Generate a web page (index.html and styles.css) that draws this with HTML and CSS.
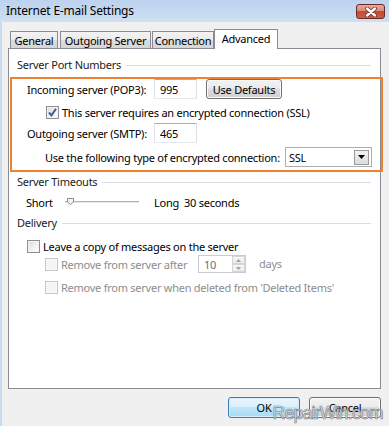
FILE: index.html
```html
<!DOCTYPE html>
<html>
<head>
<meta charset="utf-8">
<title>Internet E-mail Settings</title>
<link rel="stylesheet" href="styles.css">
</head>
<body>
<div class="window">
  <div class="titlebar">
    <span class="title">Internet E-mail Settings</span>
    <span class="close"><svg width="14" height="10" viewBox="0 0 14 10"><path d="M3 1.5 L11 8.5 M11 1.5 L3 8.5" stroke="#5a2a26" stroke-width="3.8" stroke-linecap="round"/><path d="M3 1.5 L11 8.5 M11 1.5 L3 8.5" stroke="#fff" stroke-width="2.4" stroke-linecap="round"/></svg></span>
  </div>
  <div class="client">
    <div class="tabs">
      <div class="tab t-general">General</div>
      <div class="tab t-outgoing">Outgoing Server</div>
      <div class="tab t-connection">Connection</div>
      <div class="tab t-advanced active">Advanced</div>
    </div>
    <div class="panel">
      <div class="group-head g1"><span>Server Port Numbers</span></div>
      <div class="highlight">
        <div class="row r1">
          <span class="label">Incoming server (POP3):</span>
          <span class="textbox port">995</span>
          <span class="btn defaults">Use Defaults</span>
        </div>
        <div class="row r2">
          <span class="check checked"><svg width="11" height="11" viewBox="0 0 11 11"><path d="M2 5.5 L4.5 8.3 L9 1.8" fill="none" stroke="#3b5c9c" stroke-width="2"/></svg></span>
          <span class="check-text">This server requires an encrypted connection (SSL)</span>
        </div>
        <div class="row r3">
          <span class="label">Outgoing server (SMTP):</span>
          <span class="textbox port">465</span>
        </div>
        <div class="row r4">
          <span class="label-long">Use the following type of encrypted connection:</span>
          <span class="select"><span class="select-val">SSL</span><span class="select-btn"><svg width="7" height="4" viewBox="0 0 7 4"><path d="M0 0 H7 L3.5 4 Z" fill="#000"/></svg></span></span>
        </div>
      </div>
      <div class="group-head g2"><span>Server Timeouts</span></div>
      <div class="row timeouts">
        <span class="short">Short</span>
        <span class="slider"><span class="track"></span><span class="thumb"><svg width="7" height="7" viewBox="0 0 7 7"><path d="M0.5 0.5 V4 L3.5 6.5 L6.5 4 V0.5 Z" fill="#f4f4f4" stroke="#8a8a8a"/></svg></span></span>
        <span class="long">Long</span>
        <span class="secs">30 seconds</span>
      </div>
      <div class="group-head g3"><span>Delivery</span></div>
      <div class="row d1">
        <span class="check"></span>
        <span class="check-text">Leave a copy of messages on the server</span>
      </div>
      <div class="row d2">
        <span class="check disabled"></span>
        <span class="check-text dim remove-after">Remove from server after</span>
        <span class="spinner"><span class="spin-val">10</span><span class="spin-btns"><span class="spin-up"><svg width="5" height="3" viewBox="0 0 5 3"><path d="M0 3 H5 L2.5 0 Z" fill="#a0a0a0"/></svg></span><span class="spin-down"><svg width="5" height="3" viewBox="0 0 5 3"><path d="M0 0 H5 L2.5 3 Z" fill="#a0a0a0"/></svg></span></span></span>
        <span class="dim days">days</span>
      </div>
      <div class="row d3">
        <span class="check disabled"></span>
        <span class="check-text dim">Remove from server when deleted from 'Deleted Items'</span>
      </div>
    </div>
    <div class="buttons">
      <span class="btn ok">OK</span>
      <span class="btn cancel">Cancel</span>
    </div>
    <div class="watermark">RepairWin.com</div>
  </div>
</div>
</body>
</html>
```
FILE: styles.css
```css
html, body {
  margin: 0;
  padding: 0;
}
body {
  width: 389px;
  height: 426px;
  overflow: hidden;
  font-family: "Noto Sans", "Open Sans", sans-serif;
  font-size: 11px;
  letter-spacing: -0.25px;
  color: #000;
  white-space: nowrap;
}
.window {
  width: 389px;
  height: 426px;
  display: flex;
  flex-direction: column;
  background: #f0f0f0;
}
.titlebar {
  height: 22px;
  flex: none;
  display: flex;
  align-items: flex-start;
  justify-content: space-between;
  background: linear-gradient(#bcd2ee, #cfdff3);
  padding: 0 4px 0 6px;
}
.title {
  font-size: 12px;
  line-height: 22px;
  letter-spacing: -0.2px;
  color: #000;
}
.close {
  margin-top: 4px;
  width: 29px;
  height: 15px;
  box-sizing: border-box;
  border: 1px solid #6a2b27;
  border-radius: 3px;
  background: linear-gradient(#eaa797 0%, #dc8b77 45%, #c54a32 50%, #cf5d42 100%);
  display: flex;
  align-items: center;
  justify-content: center;
}
.client {
  flex: 1;
  border-left: 2px solid #c9dbef;
  position: relative;
}
.tabs {
  display: flex;
  align-items: flex-end;
  height: 26px;
  padding-left: 8px;
  position: relative;
  z-index: 2;
}
.tab {
  height: 17px;
  box-sizing: border-box;
  border: 1px solid #898c95;
  border-bottom: none;
  background: linear-gradient(#f3f3f3 0%, #ebebeb 50%, #dddddd 51%, #d6d6d6 100%);
  display: flex;
  align-items: center;
  justify-content: center;
  padding-top: 1px;
}
.t-general { width: 48px; }
.t-outgoing { width: 91px; margin-left: 2px; }
.t-connection { width: 62px; margin-left: 1px; }
.t-advanced { width: 64px; margin-left: 0; }
.tab.active {
  height: 20px;
  background: #fff;
  margin-bottom: -1px;
  padding-top: 0;
  padding-bottom: 2px;
}
.panel {
  margin-left: 6px;
  width: 373px;
  height: 341px;
  box-sizing: border-box;
  border: 1px solid #898c95;
  background: #fff;
  display: flex;
  flex-direction: column;
}
.group-head {
  height: 14px;
  display: flex;
  align-items: center;
  padding-left: 8px;
  margin-right: 9px;
  flex: none;
}
.group-head span {
  line-height: 14px;
  color: #1b1b1b;
}
.group-head::after {
  content: "";
  flex: 1;
  height: 1px;
  background: #d5dfe5;
  margin-left: 5px;
}
.g1 { margin-top: 9px; }
.g2 { margin-top: 3px; }
.g3 { margin-top: 6px; }
.highlight {
  margin-top: 5px;
  margin-left: 1px;
  margin-right: -3px;
  border: 2px solid #f0812e;
  padding: 0 0 3px 15px;
  flex: none;
}
.row {
  display: flex;
  align-items: center;
  flex: none;
}
.r1 { height: 20px; }
.r2 { height: 16px; margin-top: 5px; padding-left: 19px; }
.r3 { height: 20px; margin-top: 3px; }
.r4 { height: 20px; margin-top: 4px; padding-left: 18px; }
.label {
  width: 127px;
  flex: none;
}
.label-long {
  width: 240px;
  flex: none;
}
.textbox {
  height: 20px;
  box-sizing: border-box;
  border: 1px solid #abadb3;
  border-left-color: #e2e3ea;
  border-right-color: #dbdfe6;
  border-bottom-color: #e3e9ef;
  background: #fff;
  display: flex;
  align-items: center;
  padding-left: 5px;
}
.port { width: 43px; }
.btn {
  box-sizing: border-box;
  border: 1px solid #707070;
  border-radius: 3px;
  background: linear-gradient(#f2f2f2 0%, #ebebeb 45%, #dddddd 50%, #cfcfcf 100%);
  box-shadow: inset 0 0 0 1px #fcfcfc;
  display: flex;
  align-items: center;
  justify-content: center;
}
.defaults {
  width: 76px;
  height: 20px;
  margin-left: 9px;
}
.check {
  width: 13px;
  height: 13px;
  box-sizing: border-box;
  border: 1px solid #8e8f8f;
  background: linear-gradient(135deg, #dcdcdc, #f6f6f6 70%, #fff);
  box-shadow: inset 0 0 0 1px #f4f4f4;
  flex: none;
  display: flex;
  align-items: center;
  justify-content: center;
}
.check.disabled {
  border-color: #c5c5c5;
  background: #f4f4f4;
  box-shadow: inset 0 0 0 1px #fbfbfb;
}
.check-text {
  margin-left: 3px;
}
.select {
  width: 87px;
  height: 20px;
  box-sizing: border-box;
  border: 1px solid #abadb3;
  background: #fff;
  display: flex;
  align-items: center;
  justify-content: space-between;
  padding: 0 2px 0 3px;
}
.select-btn {
  width: 15px;
  height: 15px;
  box-sizing: border-box;
  border: 1px solid #9a9a9a;
  background: linear-gradient(#f2f2f2, #dcdcdc);
  display: flex;
  align-items: center;
  justify-content: center;
}
.timeouts {
  height: 16px;
  margin-top: 5px;
  padding-left: 17px;
}
.short { width: 39px; flex: none; }
.slider {
  width: 74px;
  height: 12px;
  position: relative;
  flex: none;
  display: flex;
  align-items: center;
}
.track {
  width: 100%;
  height: 2px;
  box-sizing: border-box;
  border-top: 1px solid #b4b4b4;
  border-bottom: 1px solid #e8e8e8;
}
.thumb {
  position: absolute;
  left: 2px;
  top: 2px;
  display: flex;
}
.long { margin-left: 15px; flex: none; }
.secs { margin-left: 5px; }
.d1 { height: 16px; margin-top: 8px; padding-left: 18px; }
.d2 { height: 18px; margin-top: 1px; padding-left: 36px; }
.d3 { height: 16px; margin-top: 6px; padding-left: 36px; }
.dim { color: #8d8d8d; }
.remove-after { width: 137px; flex: none; }
.spinner {
  width: 48px;
  height: 18px;
  box-sizing: border-box;
  border: 1px solid #c9cdd3;
  background: #fff;
  display: flex;
  align-items: center;
  justify-content: space-between;
  padding-left: 5px;
  color: #6d6d6d;
}
.spin-btns {
  width: 13px;
  height: 16px;
  display: flex;
  flex-direction: column;
}
.spin-up, .spin-down {
  flex: 1;
  box-sizing: border-box;
  border: 1px solid #d6d6d6;
  background: linear-gradient(#f7f7f7, #ececec);
  display: flex;
  align-items: center;
  justify-content: center;
}
.days { margin-left: 13px; margin-top: -2px; }
.buttons {
  display: flex;
  justify-content: flex-end;
  gap: 9px;
  margin-top: 8px;
  padding-right: 8px;
}
.buttons .btn {
  width: 72px;
  height: 21px;
}
.btn.ok {
  border-color: #3c7fb1;
  background: linear-gradient(#eaf6fd 0%, #d9f0fc 45%, #bee6fd 50%, #a7d9f5 100%);
  box-shadow: inset 0 0 0 1px #d6eefc;
}
.watermark {
  position: absolute;
  right: 6px;
  bottom: 3px;
  font-family: "Liberation Sans", sans-serif;
  font-size: 17.5px;
  line-height: 20px;
  letter-spacing: -0.7px;
  color: #e6e9ec;
  -webkit-text-stroke: 0.7px #7f878f;
}
```
